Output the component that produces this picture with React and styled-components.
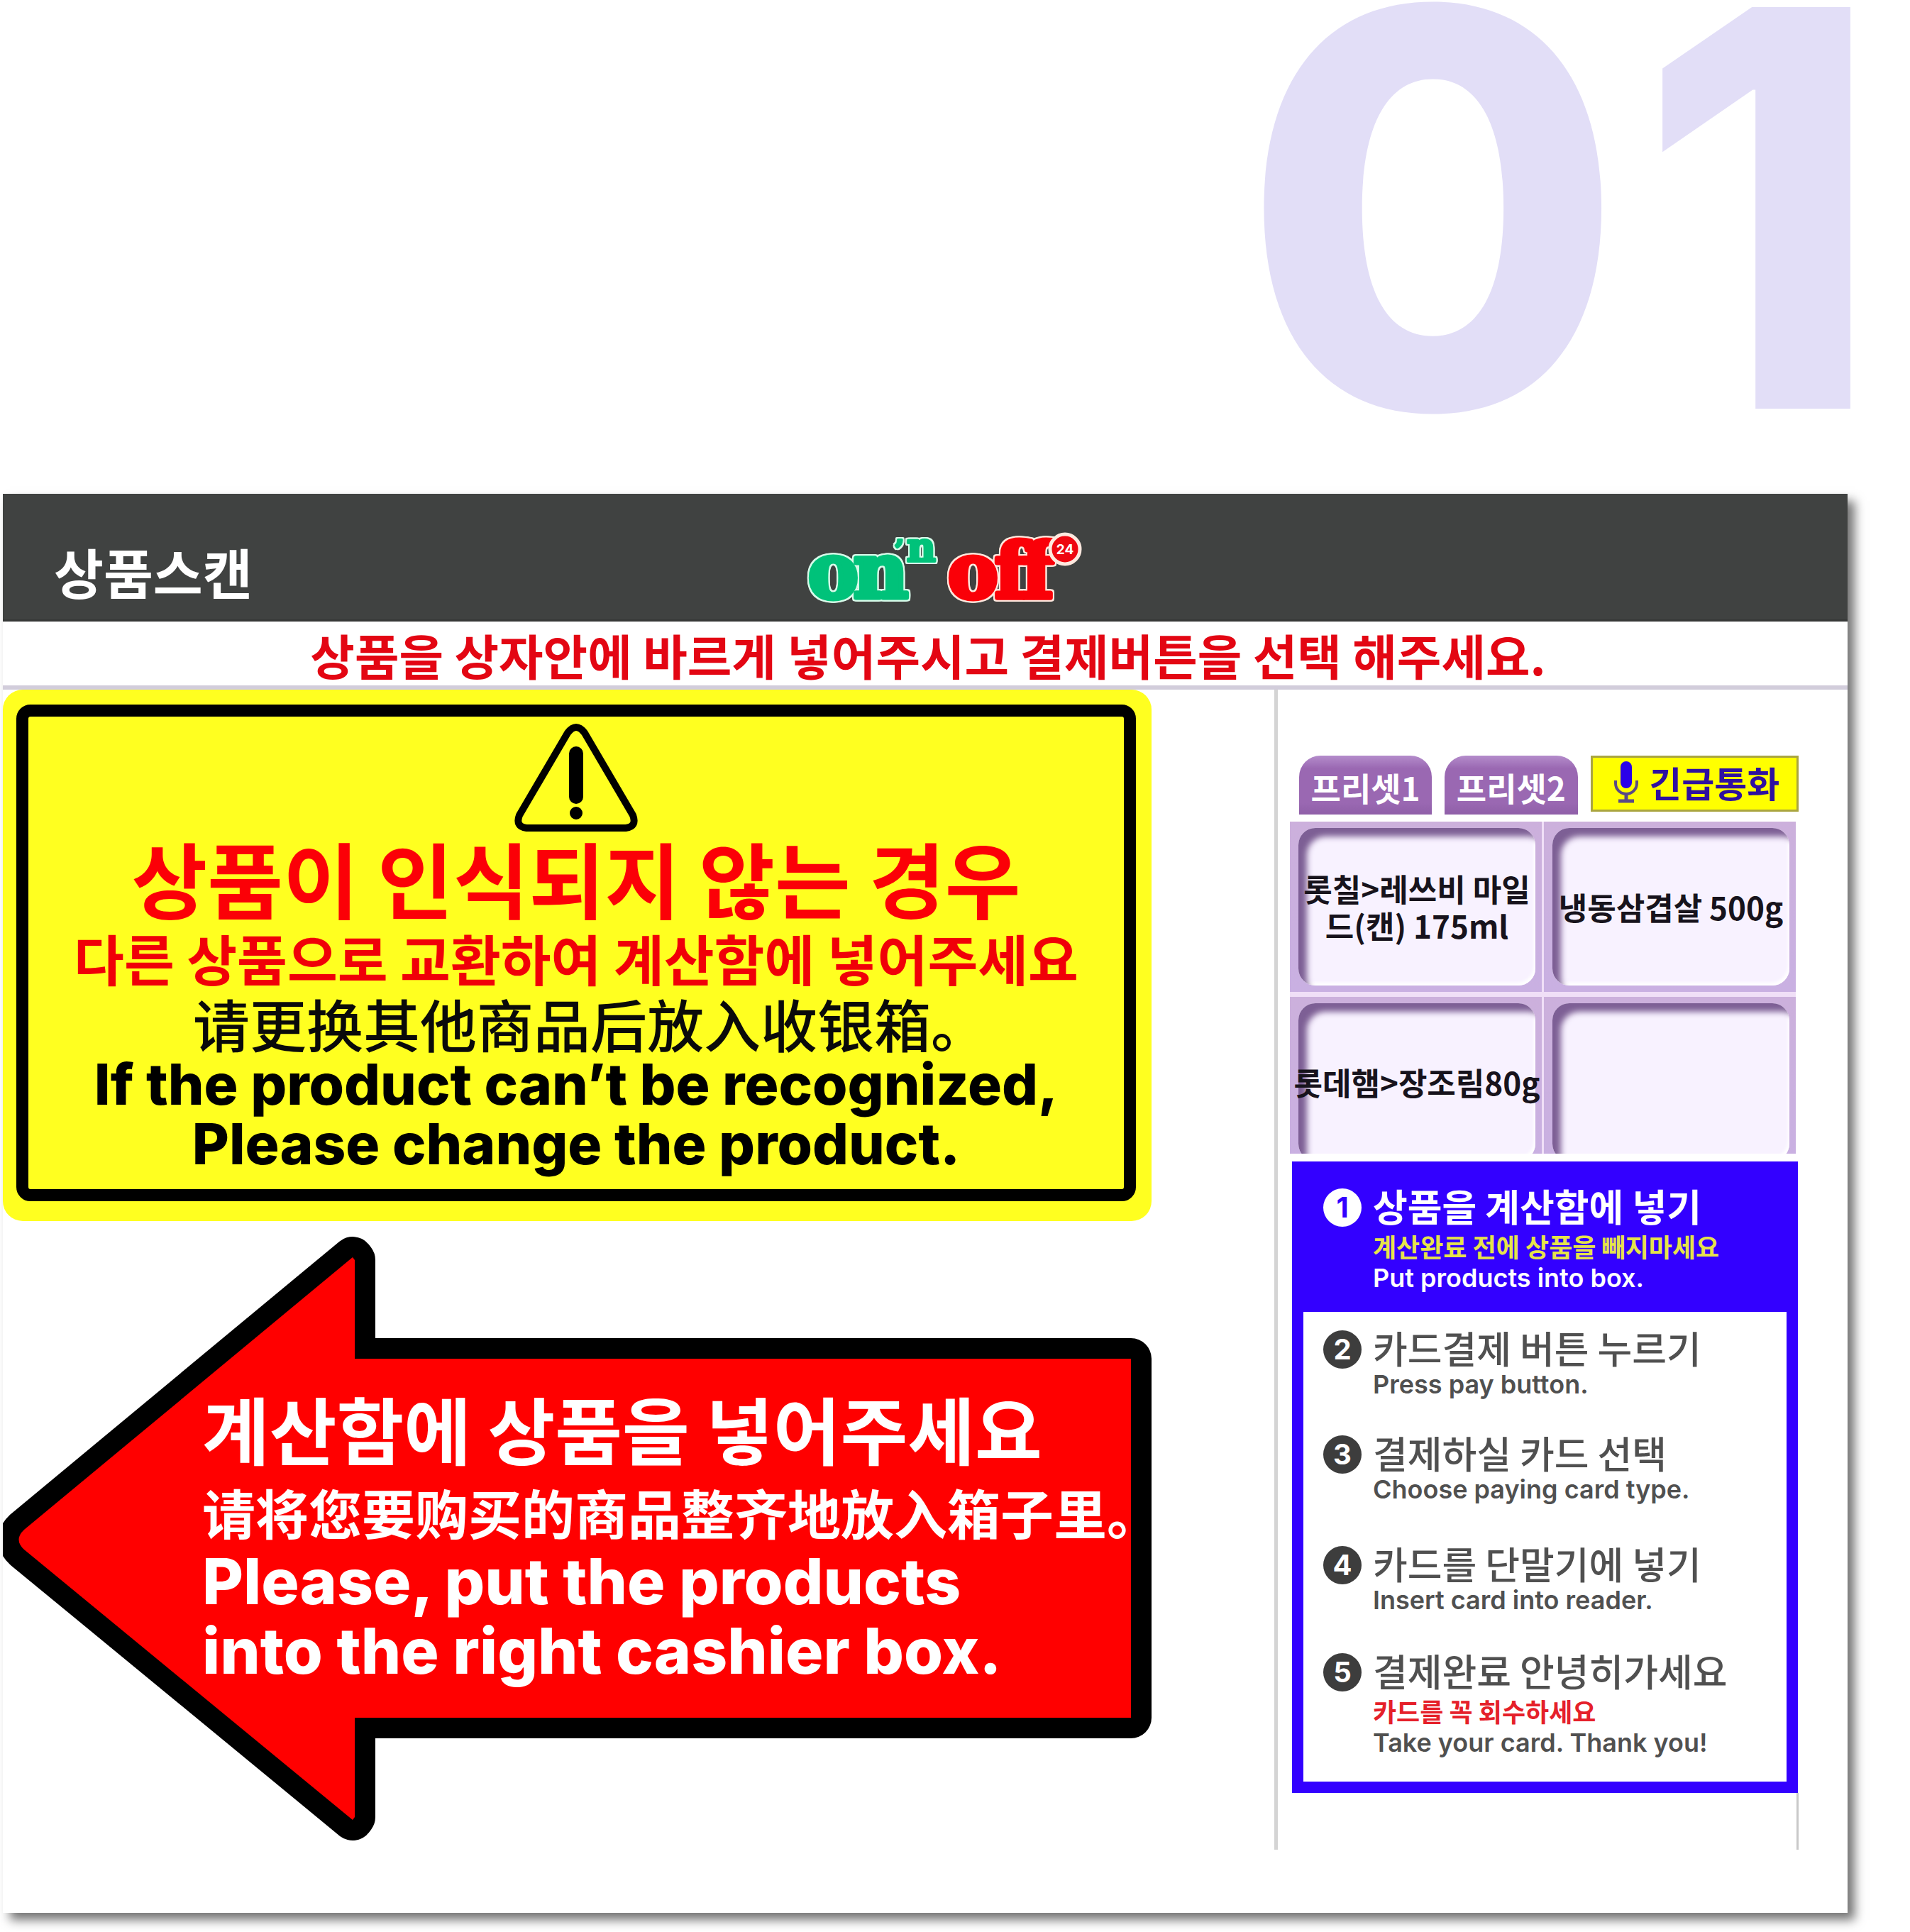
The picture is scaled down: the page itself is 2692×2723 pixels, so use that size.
import React from "react";
import styled, { createGlobalStyle } from "styled-components";

const KR = `"Noto Sans CJK KR", "Noto Sans", sans-serif`;
const SC = `"Noto Sans CJK SC", "Noto Sans", sans-serif`;
const EN = `Inter, "Noto Sans CJK KR", sans-serif`;

const GlobalStyle = createGlobalStyle`
  *, *::before, *::after { box-sizing: border-box; }
  body { margin: 0; background: #fff; font-family: ${KR}; }
  h1, h2, h3, p, ol { margin: 0; padding: 0; }
  button { font: inherit; border: 0; padding: 0; cursor: pointer; }
`;

const Page = styled.main`
  display: flex;
  flex-direction: column;
  padding: 0 88px 27px 4px;
`;

const Chapter = styled.p`
  display: flex;
  gap: 20px;
  align-self: flex-end;
  margin: 0 -48px 110px 0;
  font-family: ${EN};
  font-weight: 800;
  font-size: 778px;
  line-height: 586px;
  color: #e2def7;
`;

const Screen = styled.section`
  background: #fff;
  padding-bottom: 89px;
  box-shadow: 10px 10px 14px rgba(0, 0, 0, 0.55);
`;

const Header = styled.header`
  display: grid;
  grid-template-columns: 1fr auto 1fr;
  align-items: center;
  height: 180px;
  padding: 0 20px 0 72px;
  background: #404241;
  border-bottom: 3px solid #363837;
`;

const ScreenTitle = styled.h1`
  padding-top: 40px;
  font-size: 76px;
  line-height: 80px;
  font-weight: 700;
  color: #fff;
`;

const LogoArt = styled.svg`
  display: block;
  width: 400px;
  height: 120px;
  margin-top: 36px;
`;

const LogoWord = styled.g`
  fill: ${(p) => p.$color};
  stroke: ${(p) => p.$color};
  stroke-width: ${(p) => (p.$small ? "4px" : "7px")};
  stroke-linejoin: round;
  font-family: "DejaVu Serif", serif;
  font-weight: 700;
  filter: drop-shadow(2px 0 0 ${(p) => p.$edge}) drop-shadow(-2px 0 0 ${(p) => p.$edge})
    drop-shadow(0 2px 0 ${(p) => p.$edge}) drop-shadow(0 -2px 0 ${(p) => p.$edge});
`;

const Notice = styled.p`
  padding: 4px 0 0 8px;
  border-bottom: 6px solid #d2cddb;
  font-size: 68px;
  line-height: 86px;
  font-weight: 700;
  text-align: center;
  color: #e30613;
`;

const Body = styled.div`
  display: grid;
  grid-template-columns: 1619fr 808fr;
  column-gap: 173px;
`;

const Signs = styled.div`
  display: flex;
  flex-direction: column;
  gap: 21px;
`;

const WarningSign = styled.section`
  padding: 21px 22px 28px 19px;
  border-radius: 28px;
  background: #ffff20;
`;

const WarningFrame = styled.div`
  display: flex;
  flex-direction: column;
  align-items: center;
  height: 700px;
  padding-top: 10px;
  border: 17px solid #000;
  border-radius: 20px;
  white-space: nowrap;
`;

const WarningIcon = styled.svg`
  display: block;
  width: 174px;
  height: 152px;
`;

const WarningTitle = styled.h2`
  font-size: 116px;
  line-height: 126px;
  font-weight: 700;
  color: #fb0007;
`;

const WarningText = styled.p`
  font-size: 77px;
  line-height: 104px;
  font-weight: 700;
  color: #f00008;
`;

const WarningChinese = styled.p`
  font-family: ${SC};
  font-feature-settings: "halt";
  font-size: 80px;
  line-height: 78px;
  font-weight: 500;
  color: #0a0a0a;
`;

const WarningEnglish = styled.p`
  margin-top: 6px;
  font-family: ${EN};
  font-size: 80px;
  line-height: 84px;
  font-weight: 800;
  text-align: center;
  color: #000;
`;

const ArrowSign = styled.section`
  display: grid;
  white-space: nowrap;

  > * {
    grid-area: 1 / 1;
  }
`;

const ArrowArt = styled.svg`
  display: block;
  width: 100%;
  height: auto;
`;

const ArrowCopy = styled.div`
  padding: 202px 0 0 281px;
  color: #fff;
`;

const ArrowTitle = styled.h2`
  font-size: 103px;
  line-height: 138px;
  font-weight: 700;
`;

const ArrowChinese = styled.p`
  font-family: ${SC};
  font-feature-settings: "halt";
  font-size: 75px;
  line-height: 98px;
  font-weight: 700;
`;

const ArrowEnglish = styled.p`
  font-family: ${EN};
  font-size: 89px;
  line-height: 98px;
  font-weight: 800;
`;

const Side = styled.aside`
  padding: 93px 69px 0 17px;
  border-left: 5px solid #d4d4d4;
`;

const Toolbar = styled.div`
  display: flex;
  align-items: flex-start;
  gap: 18px;
  padding-left: 13px;
`;

const PresetTab = styled.button`
  flex: 187;
  height: 83px;
  padding-top: 4px;
  border-radius: 30px 30px 0 0;
  background: linear-gradient(#b48ccb 0, #9a68b2 22%, #9a68b2 80%, #8f5fa8 100%);
  font-size: 46px;
  line-height: 60px;
  font-weight: 700;
  color: #fff;
`;

const CallButton = styled.button`
  flex: 281;
  display: flex;
  align-items: center;
  justify-content: center;
  gap: 14px;
  height: 79px;
  padding: 0 0 6px 6px;
  border: 3px solid #aaa53f;
  background: #ffff00;
  font-size: 50px;
  line-height: 60px;
  font-weight: 700;
  color: #2f10a0;
`;

const MicIcon = styled.svg`
  display: block;
  width: 36px;
  height: 60px;
`;

const PresetWindow = styled.div`
  height: 468px;
  margin: 10px 4px 0 0;
  overflow: hidden;
  background: #f0dff7;
`;

const PresetGrid = styled.div`
  display: grid;
  grid-template-columns: repeat(2, minmax(0, 1fr));
  grid-auto-rows: 240px;
  gap: 7px 3px;
`;

const PresetItem = styled.button`
  display: flex;
  padding: 9px 9px 9px 12px;
  background: linear-gradient(#ccb0dc, #c9b0e2);
`;

const PresetFace = styled.span`
  flex: 1;
  min-width: 0;
  display: flex;
  flex-direction: column;
  align-items: center;
  justify-content: center;
  border-radius: 24px;
  background: #f8f2ff;
  box-shadow: inset 14px 14px 8px -2px #7d5f95, inset -2px -4px 4px #fff;
  font-size: 44px;
  line-height: 52px;
  font-weight: 700;
  white-space: nowrap;
  color: #17131c;
`;

const Guide = styled.ol`
  margin: 11px 1px 0 3px;
  border: 16px solid #3300ff;
  border-top-width: 0;
  list-style: none;
  display: grid;
  grid-template-rows: 230px 148px 156px 151px auto;
  padding-bottom: 35px;
  background: linear-gradient(#3300ff 212px, #fff 212px);
`;

const Step = styled.li`
  display: flex;
  align-items: flex-start;
  gap: 16px;
  padding: ${(p) => (p.$active ? "30px" : "0")} 0 0 28px;
  color: ${(p) => (p.$active ? "#fff" : "#505050")};
  white-space: nowrap;
`;

const StepNumber = styled.span`
  flex: none;
  width: 54px;
  height: 54px;
  margin-top: 8px;
  border-radius: 50%;
  background: ${(p) => (p.$active ? "#fff" : "#3d3d3d")};
  color: ${(p) => (p.$active ? "#3300ff" : "#fff")};
  font-family: ${EN};
  font-size: 40px;
  line-height: 54px;
  font-weight: 700;
  text-align: center;
`;

const StepTitle = styled.h3`
  font-size: 53px;
  line-height: 64px;
  font-weight: ${(p) => (p.$active ? 700 : 500)};
`;

const StepNote = styled.p`
  font-size: 36px;
  line-height: 50px;
  font-weight: 700;
  color: ${(p) => (p.$active ? "#e6e34a" : "#e5202a")};
`;

const StepEnglish = styled.p`
  font-family: ${EN};
  font-size: 36px;
  line-height: 40px;
  font-weight: 600;
`;

const SideTail = styled.div`
  height: 80px;
  border-right: 3px solid #c9c9c9;
`;

const presets = [["롯칠>레쓰비 마일", "드(캔) 175ml"], ["냉동삼겹살 500g"], ["롯데햄>장조림80g"], []];

const steps = [
  { title: "상품을 계산함에 넣기", note: "계산완료 전에 상품을 빼지마세요", english: "Put products into box.", active: true },
  { title: "카드결제 버튼 누르기", english: "Press pay button." },
  { title: "결제하실 카드 선택", english: "Choose paying card type." },
  { title: "카드를 단말기에 넣기", english: "Insert card into reader." },
  { title: "결제완료 안녕히가세요", note: "카드를 꼭 회수하세요", english: "Take your card. Thank you!" },
];

function Logo() {
  return (
    <LogoArt viewBox="0 0 400 120" role="img" aria-label="on'n off 24">
      <LogoWord $color="#00c27a" $edge="#d8fbea">
        <text x="9 73" y="99" fontSize="106">on</text>
      </LogoWord>
      <LogoWord $small $color="#00c27a" $edge="#d8fbea">
        <text x="131" y="44" fontSize="36">’</text>
        <text x="148" y="48" fontSize="56">n</text>
      </LogoWord>
      <LogoWord $color="#fa0008" $edge="#ffe9df">
        <text x="206 272 310" y="99" fontSize="106">off</text>
      </LogoWord>
      <circle cx="371" cy="31" r="21" fill="#ee0710" stroke="#ffe9df" strokeWidth="5" />
      <text x="371" y="38" fontFamily="Inter, sans-serif" fontWeight="700" fontSize="19" textAnchor="middle" fill="#fff">24</text>
    </LogoArt>
  );
}

export default function App() {
  return (
    <>
      <GlobalStyle />
      <Page>
        <Chapter>
          <span>0</span>
          <span>1</span>
        </Chapter>
        <Screen>
          <Header>
            <ScreenTitle>상품스캔</ScreenTitle>
            <Logo />
          </Header>
          <Notice>상품을 상자안에 바르게 넣어주시고 결제버튼을 선택 해주세요.</Notice>
          <Body>
            <Signs>
              <WarningSign>
                <WarningFrame>
                  <WarningIcon viewBox="0 0 174 152" aria-hidden="true">
                    <path
                      d="M75 13Q87 -3 99 13L167 129Q173 145 157 147H17Q1 145 7 129Z"
                      fill="none"
                      stroke="#000"
                      strokeWidth="10"
                      strokeLinejoin="round"
                    />
                    <path d="M87 42V103" stroke="#000" strokeWidth="20" strokeLinecap="round" />
                    <circle cx="87" cy="126" r="9" />
                  </WarningIcon>
                  <WarningTitle>상품이 인식되지 않는 경우</WarningTitle>
                  <WarningText>다른 상품으로 교환하여 계산함에 넣어주세요</WarningText>
                  <WarningChinese lang="zh-CN">请更换其他商品后放入收银箱。</WarningChinese>
                  <WarningEnglish lang="en">
                    If the product can’t be recognized,
                    <br />
                    Please change the product.
                  </WarningEnglish>
                </WarningFrame>
              </WarningSign>
              <ArrowSign>
                <ArrowArt viewBox="0 0 1619 853" aria-hidden="true">
                  <path
                    d="M493 30L496 34V173H1590V679H496V819L493 823L30 442Q15 428 30 414Z"
                    fill="#ff0000"
                    stroke="#000"
                    strokeWidth="58"
                    strokeLinejoin="round"
                    paintOrder="stroke"
                  />
                </ArrowArt>
                <ArrowCopy>
                  <ArrowTitle>계산함에 상품을 넣어주세요</ArrowTitle>
                  <ArrowChinese lang="zh-CN">请将您要购买的商品整齐地放入箱子里。</ArrowChinese>
                  <ArrowEnglish lang="en">
                    Please, put the products
                    <br />
                    into the right cashier box.
                  </ArrowEnglish>
                </ArrowCopy>
              </ArrowSign>
            </Signs>
            <Side>
              <Toolbar>
                <PresetTab type="button">프리셋1</PresetTab>
                <PresetTab type="button">프리셋2</PresetTab>
                <CallButton type="button">
                  <MicIcon viewBox="0 0 36 60" aria-hidden="true">
                    <rect x="10" y="1" width="16" height="38" rx="8" fill="#2a00e8" />
                    <path d="M3 28V32A15 15 0 0 0 33 32V28" fill="none" stroke="#5a4a86" strokeWidth="4" />
                    <path d="M18 47V56M7 57H29" stroke="#5a4a86" strokeWidth="5" />
                  </MicIcon>
                  긴급통화
                </CallButton>
              </Toolbar>
              <PresetWindow>
                <PresetGrid>
                  {presets.map((lines, i) => (
                    <PresetItem key={i} type="button" aria-label={lines.length ? undefined : "빈 프리셋"}>
                      <PresetFace>
                        {lines.map((line) => (
                          <span key={line}>{line}</span>
                        ))}
                      </PresetFace>
                    </PresetItem>
                  ))}
                </PresetGrid>
              </PresetWindow>
              <Guide>
                {steps.map((step, i) => (
                  <Step key={step.title} $active={step.active}>
                    <StepNumber $active={step.active}>{i + 1}</StepNumber>
                    <div>
                      <StepTitle $active={step.active}>{step.title}</StepTitle>
                      {step.note && <StepNote $active={step.active}>{step.note}</StepNote>}
                      <StepEnglish lang="en">{step.english}</StepEnglish>
                    </div>
                  </Step>
                ))}
              </Guide>
              <SideTail />
            </Side>
          </Body>
        </Screen>
      </Page>
    </>
  );
}
